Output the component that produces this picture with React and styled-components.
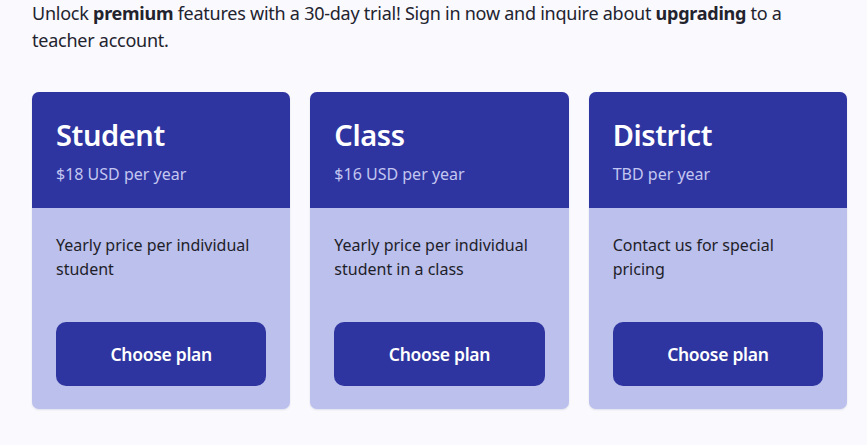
import React from "react";
import styled, { createGlobalStyle } from "styled-components";

const Global = createGlobalStyle`
  html, body { margin: 0; padding: 0; background: #f9f9fe; }
  body { font-family: "Noto Sans", "Open Sans", sans-serif; }
`;

const Page = styled.div`
  padding: 0 20px 0 32px;
  width: 867px;
  box-sizing: border-box;
  height: 445px;
  overflow: hidden;
`;

const Intro = styled.p`
  margin: 0 0 38px;
  font-size: 18px;
  line-height: 27px;
  color: #23232e;
  letter-spacing: -0.25px;
  b { font-weight: 700; }
`;

const Grid = styled.div`
  display: grid;
  grid-template-columns: repeat(3, 1fr);
  gap: 20px;
`;

const Card = styled.div`
  border-radius: 7px;
  overflow: hidden;
  background: #bcc0ec;
  display: flex;
  flex-direction: column;
  box-shadow: 0 1px 2px rgba(40, 40, 100, 0.12);
`;

const Header = styled.div`
  background: #2e35a0;
  padding: 25px 24px 23px;
`;

const Title = styled.h2`
  margin: 0;
  font-size: 29px;
  line-height: 36px;
  font-weight: 600;
  color: #fff;
  letter-spacing: -0.4px;
`;

const Price = styled.div`
  margin-top: 10px;
  font-size: 16px;
  line-height: 22px;
  color: #c3c6f0;
`;

const Body = styled.div`
  padding: 25px 24px 23px;
  display: flex;
  flex-direction: column;
`;

const Desc = styled.p`
  margin: 0;
  font-size: 16px;
  line-height: 24px;
  color: #1e1e2a;
  min-height: 48px;
`;

const Button = styled.button`
  margin-top: 41px;
  height: 64px;
  border: none;
  border-radius: 10px;
  background: #2e35a0;
  color: #fff;
  font-family: inherit;
  font-size: 17.5px;
  font-weight: 600;
  letter-spacing: -0.3px;
  cursor: pointer;
`;

const plans = [
  { name: "Student", price: "$18 USD per year", desc: "Yearly price per individual student" },
  { name: "Class", price: "$16 USD per year", desc: "Yearly price per individual student in a class" },
  { name: "District", price: "TBD per year", desc: "Contact us for special pricing" },
];

export default function App() {
  return (
    <>
      <Global />
      <Page>
        <Intro>
          Unlock <b>premium</b> features with a 30-day trial! Sign in now and inquire about{" "}
          <b>upgrading</b> to a teacher account.
        </Intro>
        <Grid>
          {plans.map((p) => (
            <Card key={p.name}>
              <Header>
                <Title>{p.name}</Title>
                <Price>{p.price}</Price>
              </Header>
              <Body>
                <Desc>{p.desc}</Desc>
                <Button>Choose plan</Button>
              </Body>
            </Card>
          ))}
        </Grid>
      </Page>
    </>
  );
}
